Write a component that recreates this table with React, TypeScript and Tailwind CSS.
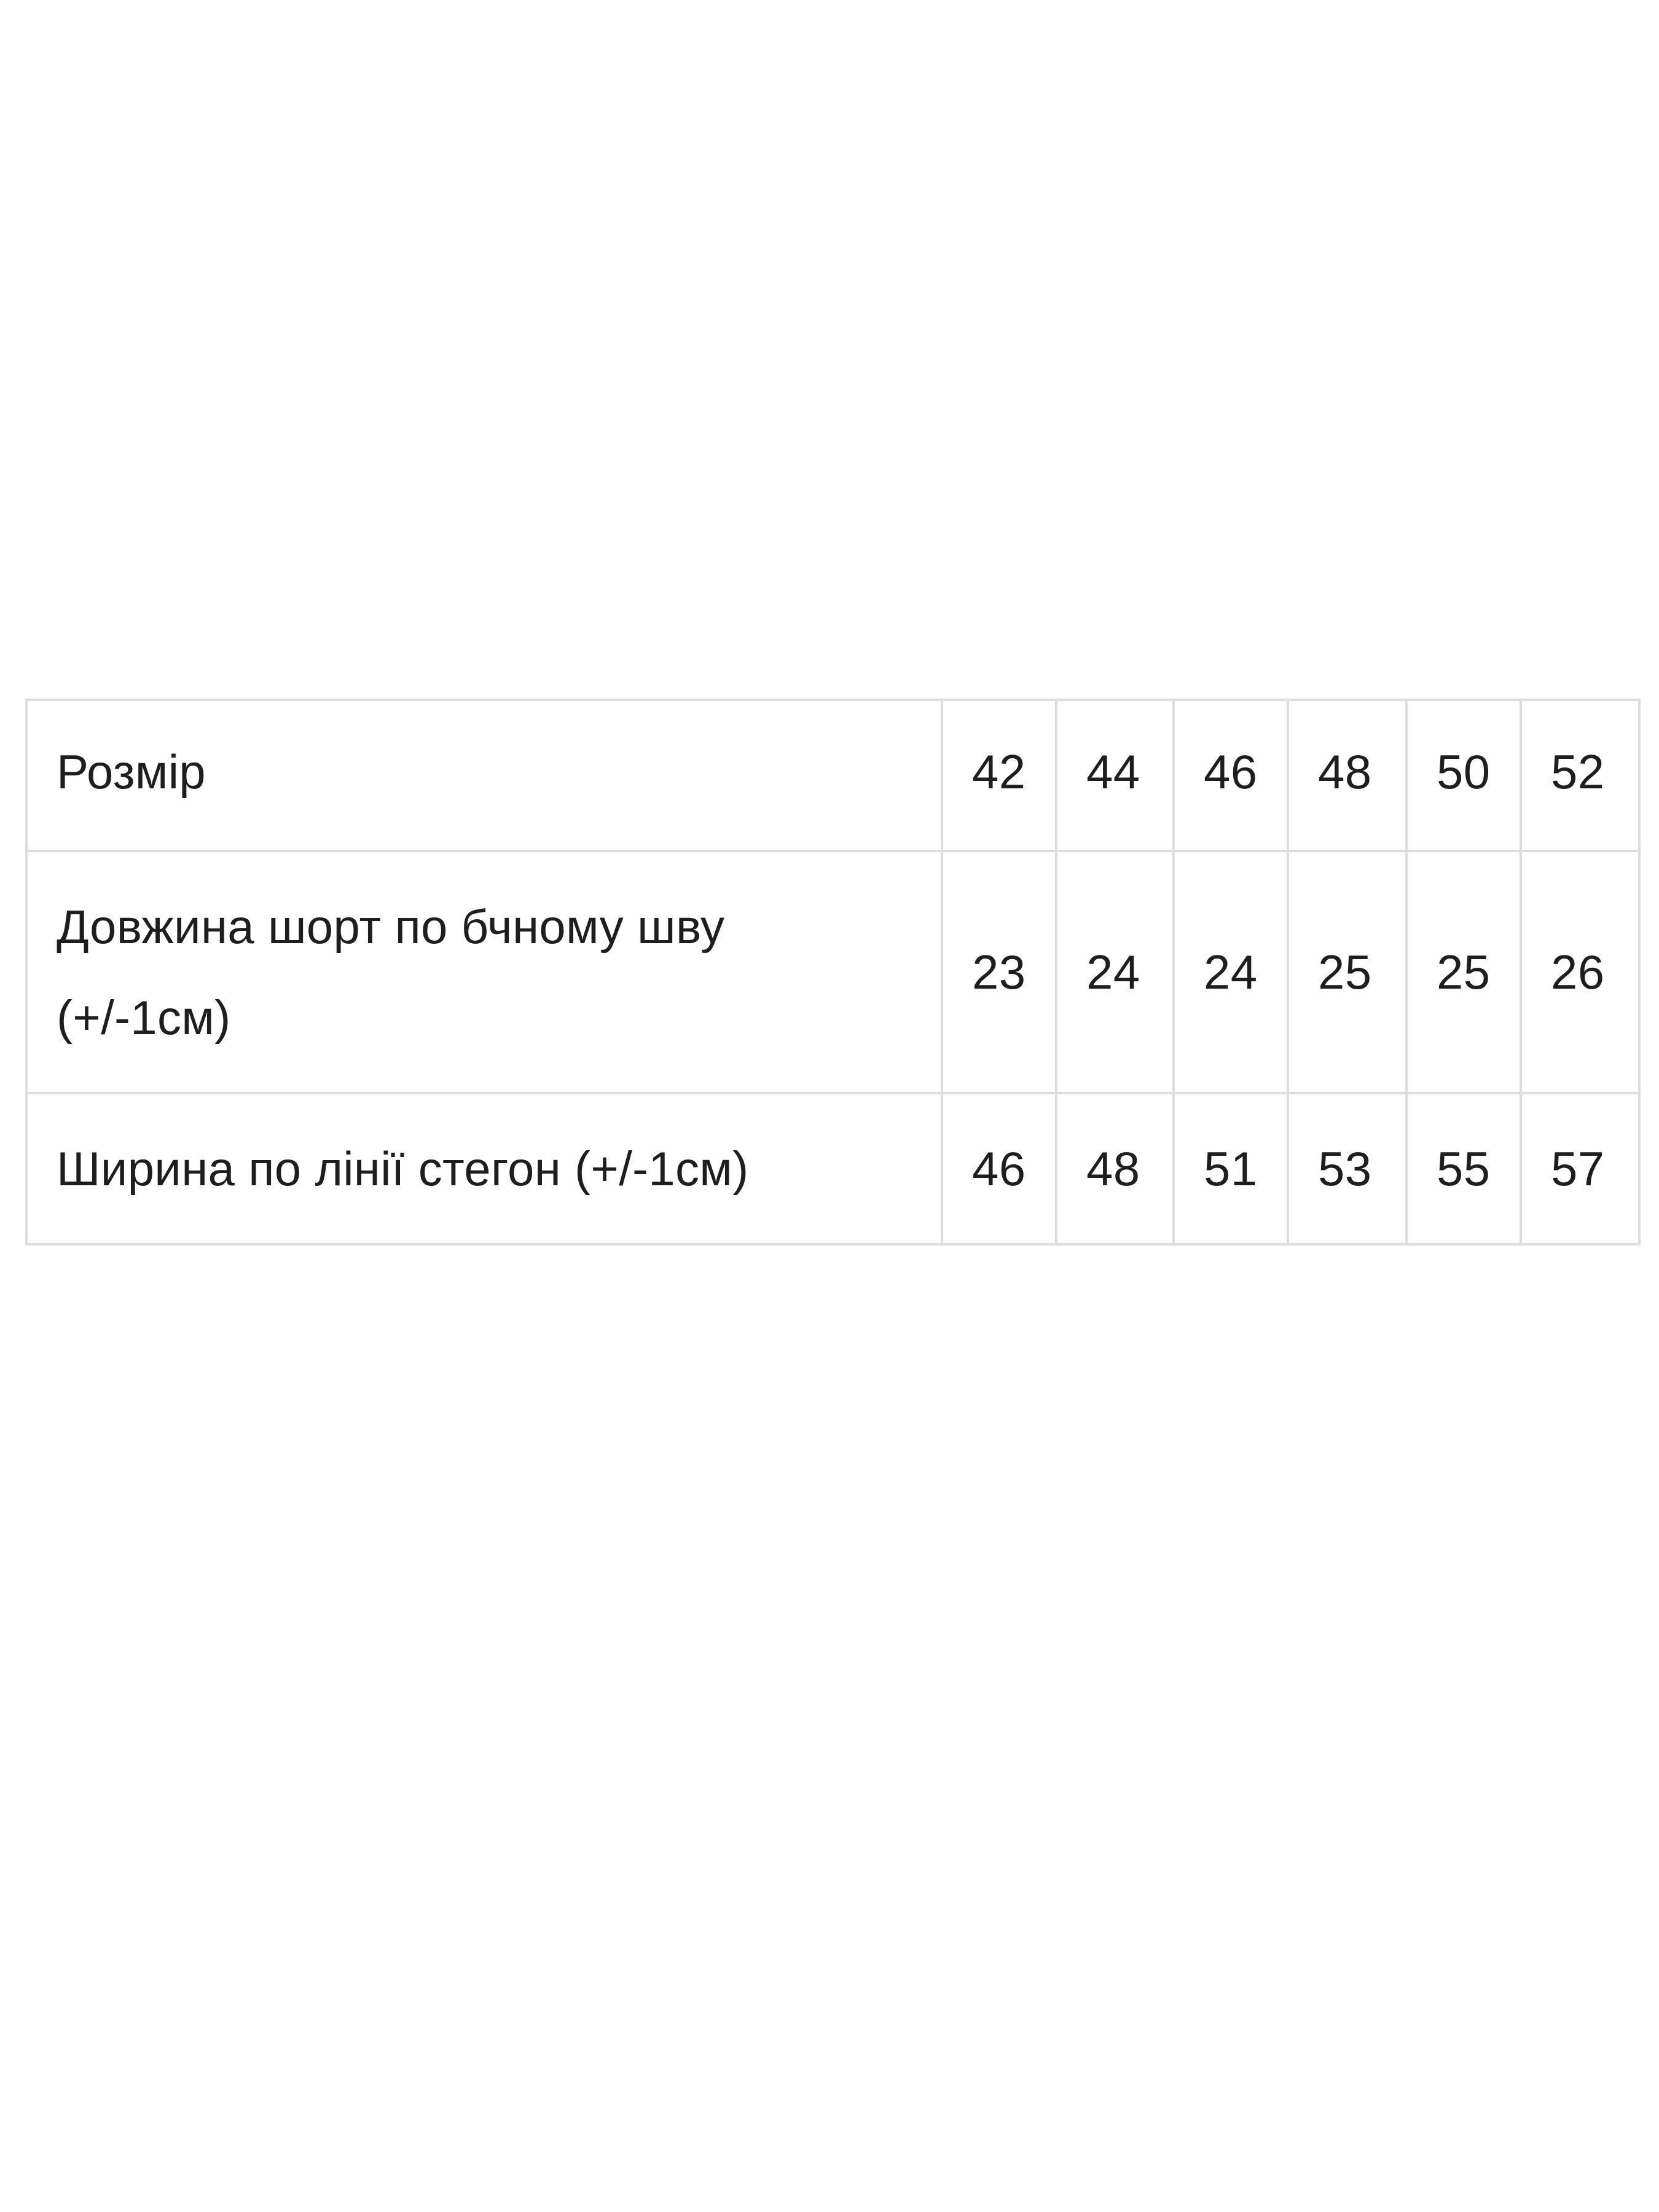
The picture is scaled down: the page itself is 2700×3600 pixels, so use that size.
const sizes = ["42", "44", "46", "48", "50", "52"];

const rows: { label: React.ReactNode; values: string[] }[] = [
  {
    label: (
      <>
        Довжина шорт по бчному шву
        <br />
        (+/-1см)
      </>
    ),
    values: ["23", "24", "24", "25", "25", "26"],
  },
  {
    label: "Ширина по лінії стегон (+/-1см)",
    values: ["46", "48", "51", "53", "55", "57"],
  },
];

const cell = "border-[4px] border-[#dddddd] px-[47px] py-[47px] align-middle";

export default function App() {
  return (
    <div className="min-h-[3600px] bg-white pl-[41px] pt-[1137px] font-['Liberation_Sans',Arial,sans-serif] text-[78px] leading-[148px] tracking-[0.3px] text-[#1e1e1e]">
      <table className="w-[2625px] table-fixed border-collapse">
        <colgroup>
          <col className="w-[1490px]" />
          <col className="w-[186px]" />
          <col className="w-[191px]" />
          <col className="w-[186px]" />
          <col className="w-[193px]" />
          <col className="w-[186px]" />
          <col className="w-[193px]" />
        </colgroup>
        <tbody>
          <tr>
            <td className={cell}>
              <span className="relative -top-[6px]">Розмір</span>
            </td>
            {sizes.map((size) => (
              <td key={size} className={cell}>
                <span className="relative -top-[6px]">{size}</span>
              </td>
            ))}
          </tr>
          {rows.map((row, i) => (
            <tr key={i}>
              <td className={cell}>{row.label}</td>
              {row.values.map((value, j) => (
                <td key={j} className={cell}>
                  {value}
                </td>
              ))}
            </tr>
          ))}
        </tbody>
      </table>
    </div>
  );
}
